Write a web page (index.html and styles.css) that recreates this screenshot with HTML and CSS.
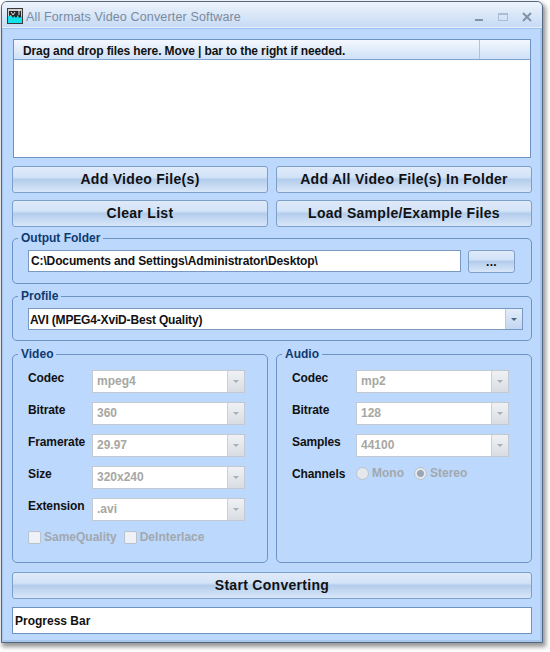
FILE: index.html
```html
<!DOCTYPE html>
<html lang="en">
<head>
<meta charset="utf-8">
<title>All Formats Video Converter Software</title>
<link rel="stylesheet" href="styles.css">
</head>
<body>
<div class="window">
  <header class="titlebar">
    <svg class="app-icon" width="16" height="16" viewBox="0 0 16 16">
      <rect x="0.5" y="0.5" width="15" height="15" fill="#cfcfcf" stroke="#3a3a3a"/>
      <rect x="1" y="8" width="14" height="7" fill="#14e2ea"/>
      <path d="M2 3h12v6l-2 1-1-3-2 3-2-2-1 2-2-3-2 1z" fill="#262626"/>
      <path d="M4 4l2 3 2-3M12 1v6" stroke="#e8e8e8" stroke-width="1" fill="none"/>
    </svg>
    <span class="title">All Formats Video Converter Software</span>
    <div class="win-controls">
      <svg width="10" height="10" viewBox="0 0 10 10"><rect x="1" y="7" width="8" height="2" fill="#7f93ab"/></svg>
      <svg width="10" height="10" viewBox="0 0 10 10"><rect x="0.5" y="1.5" width="9" height="7" fill="none" stroke="#a9bdd6"/><rect x="0" y="1" width="10" height="2" fill="#a9bdd6"/></svg>
      <svg width="10" height="10" viewBox="0 0 10 10"><path d="M1 1l8 8M9 1l-8 8" stroke="#7f93ab" stroke-width="2" fill="none"/></svg>
    </div>
  </header>
  <main class="content">
    <section class="filelist">
      <div class="list-head">
        <span class="list-col">Drag and drop files here. Move | bar to the right if needed.</span>
        <span class="list-rest"></span>
      </div>
    </section>
    <div class="button-grid">
      <button class="btn">Add Video File(s)</button>
      <button class="btn">Add All Video File(s) In Folder</button>
      <button class="btn">Clear List</button>
      <button class="btn">Load Sample/Example Files</button>
    </div>
    <fieldset class="group group-output">
      <legend>Output Folder</legend>
      <div class="path-row">
        <div class="field path">C:\Documents and Settings\Administrator\Desktop\</div>
        <button class="btn btn-browse">...</button>
      </div>
    </fieldset>
    <fieldset class="group group-profile">
      <legend>Profile</legend>
      <div class="combo combo-active">
        <span class="combo-value">AVI (MPEG4-XviD-Best Quality)</span>
        <span class="combo-arrow"><i></i></span>
      </div>
    </fieldset>
    <div class="columns">
      <fieldset class="group group-panel">
        <legend>Video</legend>
        <div class="form">
          <span class="lbl">Codec</span><div class="combo"><span class="combo-value">mpeg4</span><span class="combo-arrow"><i></i></span></div>
          <span class="lbl">Bitrate</span><div class="combo"><span class="combo-value">360</span><span class="combo-arrow"><i></i></span></div>
          <span class="lbl">Framerate</span><div class="combo"><span class="combo-value">29.97</span><span class="combo-arrow"><i></i></span></div>
          <span class="lbl">Size</span><div class="combo"><span class="combo-value">320x240</span><span class="combo-arrow"><i></i></span></div>
          <span class="lbl">Extension</span><div class="combo"><span class="combo-value">.avi</span><span class="combo-arrow"><i></i></span></div>
        </div>
        <div class="options">
          <span class="opt"><i class="check"></i>SameQuality</span>
          <span class="opt"><i class="check"></i>DeInterlace</span>
        </div>
      </fieldset>
      <fieldset class="group group-panel">
        <legend>Audio</legend>
        <div class="form">
          <span class="lbl">Codec</span><div class="combo"><span class="combo-value">mp2</span><span class="combo-arrow"><i></i></span></div>
          <span class="lbl">Bitrate</span><div class="combo"><span class="combo-value">128</span><span class="combo-arrow"><i></i></span></div>
          <span class="lbl">Samples</span><div class="combo"><span class="combo-value">44100</span><span class="combo-arrow"><i></i></span></div>
          <span class="lbl">Channels</span>
          <div class="radios">
            <span class="opt"><i class="radio"></i>Mono</span>
            <span class="opt"><i class="radio radio-on"></i>Stereo</span>
          </div>
        </div>
      </fieldset>
    </div>
    <button class="btn btn-start">Start Converting</button>
    <div class="progress">Progress Bar</div>
  </main>
</div>
</body>
</html>
```
FILE: styles.css
```css
* { box-sizing: border-box; }
html, body { margin: 0; padding: 0; background: #fff; }
body { width: 550px; height: 652px; padding: 1px 0 0 1px; font-family: "Liberation Sans", Arial, sans-serif; }
.window {
  width: 542px; height: 642px;
  background: #bcd8fc;
  border: 1px solid #53677f;
  border-radius: 6px 6px 0 0;
  box-shadow: 2px 3px 4px 1px rgba(70,70,70,.55), inset -2px -2px 0 #a6c6ee, inset 1px 0 0 #a6c6ee;
  display: flex; flex-direction: column;
}
.titlebar {
  height: 26px; flex: none;
  display: flex; align-items: center;
  padding: 3px 10px 0 5px;
  background: linear-gradient(#eef4fc 0, #dbe8f8 45%, #c7dbf5 100%);
  border-bottom: 1px solid #e6f0fc;
  border-radius: 5px 5px 0 0;
}
.app-icon { flex: none; margin-right: 3px; }
.title { font-size: 12.5px; color: #7a8ba0; letter-spacing: .15px; padding-top: 2px; }
.win-controls { margin-left: auto; margin-top: 1px; display: flex; gap: 14px; align-items: center; }
.content { flex: 1; display: flex; flex-direction: column; padding: 10px 10px 0 10px; border-top: 1px solid #9dc0ec; }
.filelist { height: 119px; margin: 0 1px; background: #fff; border: 1px solid #6e93c0; flex: none; }
.list-head {
  display: flex; height: 20px;
  background: linear-gradient(#f4f8fe, #cfe0f6);
  border-bottom: 1px solid #7fa3cf;
  font-size: 12px; font-weight: 700; color: #111; line-height: 22px; letter-spacing: -.12px;
}
.list-col { width: 466px; padding-left: 9px; border-right: 1px solid #a9c4e4; white-space: nowrap; }
.button-grid { display: grid; grid-template-columns: 256px 256px; column-gap: 8px; row-gap: 7px; margin-top: 8px; }
.btn {
  height: 27px; padding: 0 0 2px;
  font: 700 14px/1 "Liberation Sans", Arial, sans-serif; letter-spacing: .3px; color: #111;
  border: 1px solid #7e9fc8; border-radius: 3px;
  background: linear-gradient(#dfeafa 0, #d3e3f7 40%, #b4cdec 50%, #d9e7f9 100%);
}
.group {
  margin: 0; min-width: 0;
  border: 1px solid #6c93c4; border-radius: 5px;
  padding: 0;
}
.group legend { margin-left: -10px; padding: 0 3px; font-size: 12px; font-weight: 700; color: #0f3a70; line-height: 14px; }
.group-output { height: 53px; margin-top: 4px; padding: 5px 16px 0 15px; }
.path-row { display: flex; gap: 7px; }
.field {
  flex: 1; height: 22px; background: #fff; border: 1px solid #7899c2;
  font-size: 12px; font-weight: 700; color: #111; line-height: 20px; padding-left: 2px; white-space: nowrap; letter-spacing: -.125px;
}
.btn-browse { width: 47px; height: 23px; flex: none; font-size: 12px; padding: 0; }
.group-profile { height: 52px; margin-top: 5px; padding: 5px 8px 0 15px; }
.combo { display: flex; height: 23px; background: #fff; border: 1px solid #c3c9d2; }
.combo-value { flex: 1; font-size: 12px; font-weight: 700; color: #a7a7a3; line-height: 21px; padding-left: 4px; white-space: nowrap; }
.combo-arrow { width: 17px; flex: none; border-left: 1px solid #c9d0d9; background: linear-gradient(#eff1f4, #d9dde3); display: flex; align-items: center; justify-content: center; }
.combo-arrow i { width: 0; height: 0; border: 3px solid transparent; border-top-color: #a9afb8; border-bottom: 0; }
.combo-active { height: 22px; border-color: #7899c2; }
.combo-active .combo-value { color: #111; padding-left: 1px; line-height: 22px; letter-spacing: -.17px; }
.combo-active .combo-arrow { border-left-color: #b5cce8; background: linear-gradient(#e3edfa, #c3d7f1); }
.combo-active .combo-arrow i { border-top-color: #4a6685; }
.columns { display: grid; grid-template-columns: 256px 256px; column-gap: 8px; height: 216px; margin-top: 6px; flex: none; }
.group-panel { height: 216px; padding: 9px 0 0 15px; }
.form { display: grid; grid-template-columns: 64px 153px; grid-auto-rows: 23px; row-gap: 9px; }
.lbl { font-size: 12px; font-weight: 700; color: #111; line-height: 15px; letter-spacing: -.1px; padding-top: 1px; }
.options { display: flex; gap: 7px; margin-top: 9px; }
.opt { display: inline-flex; align-items: center; font-size: 12px; font-weight: 700; color: #a2a8ae; white-space: nowrap; }
.check { width: 13px; height: 13px; margin-right: 3px; background: #eef2f7; border: 1px solid #b9c2cd; border-radius: 2px; }
.radios { display: flex; gap: 10px; align-items: flex-start; }
.radio { width: 13px; height: 13px; margin-right: 3px; border-radius: 50%; background: #e4e8ed; border: 1px solid #b9c2cd; }
.radio-on { background: radial-gradient(circle, #9aa6b5 0 3px, #e4e8ed 4px); }
.btn-start { display: block; width: 520px; flex: none; margin-top: 9px; }
.progress {
  flex: none; height: 27px; width: 520px; margin-top: 8px; background: #fff; border: 1px solid #6e93c0;
  font-size: 12px; font-weight: 700; color: #111; line-height: 26px; padding-left: 2px;
}
```
